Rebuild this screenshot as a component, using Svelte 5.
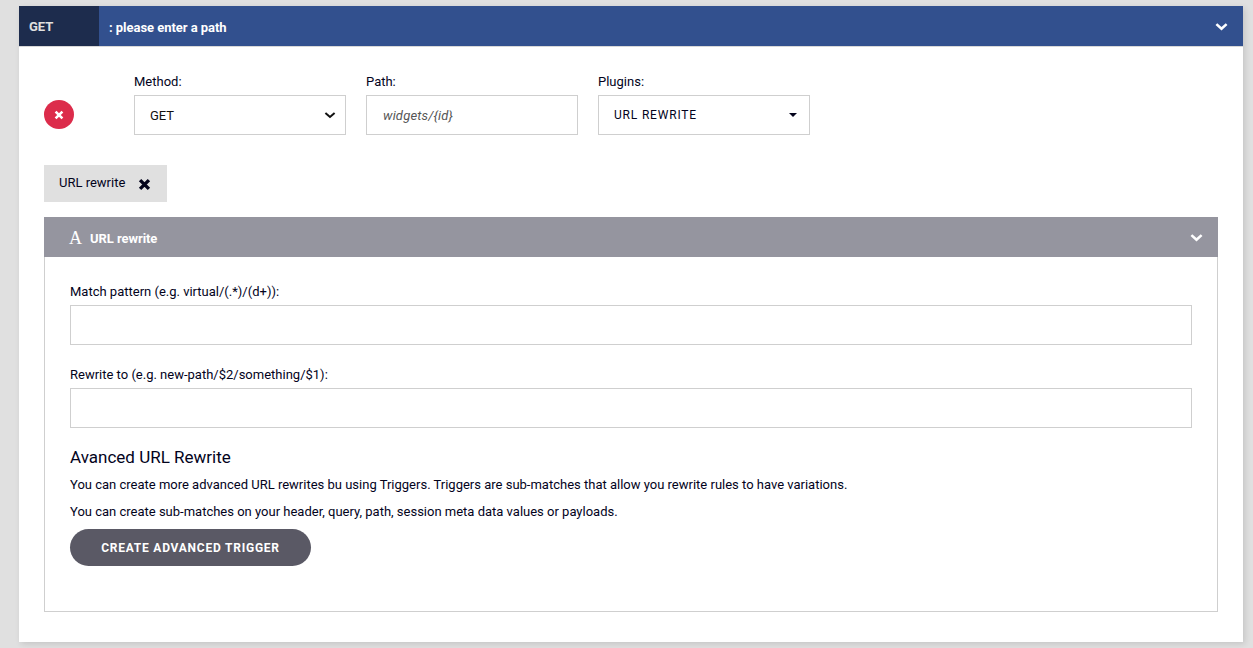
<script>
  const method = 'GET';
  const chevron = 'M1.4 2.1 L6.5 6.7 L11.6 2.1';
  const cross = 'M1.6 1.6 L8.4 8.4 M8.4 1.6 L1.6 8.4';
</script>

<main>
  <section class="card">
    <header class="bar">
      <strong class="verb">{method}</strong>
      <strong class="path">: please enter a path</strong>
      <svg class="chev" width="13" height="9" viewBox="0 0 13 9"><path d={chevron} /></svg>
    </header>

    <div class="body">
      <div class="row">
        <button class="remove" aria-label="Remove">
          <svg width="10" height="10" viewBox="0 0 10 10"><path d={cross} /></svg>
        </button>
        <div class="field">
          <span class="label">Method:</span>
          <div class="box select">
            <span class="value">{method}</span>
            <svg class="dark" width="12" height="9" viewBox="0 0 12 9"><path d="M1.4 2 L6 6 L10.6 2" /></svg>
          </div>
        </div>
        <div class="field">
          <span class="label">Path:</span>
          <div class="box"><em>widgets/&#123;id&#125;</em></div>
        </div>
        <div class="field">
          <span class="label">Plugins:</span>
          <div class="box select plug">
            <span class="upper">URL REWRITE</span>
            <svg width="8" height="4" viewBox="0 0 8 4"><path d="M0 0H8L4 4Z" fill="#03031c" /></svg>
          </div>
        </div>
      </div>

      <div class="tag">
        <span>URL rewrite</span>
        <svg width="13" height="13" viewBox="0 0 10 10"><path d={cross} /></svg>
      </div>

      <section class="panel">
        <header>
          <span class="glyph">A</span>
          <strong>URL rewrite</strong>
          <svg class="chev" width="13" height="9" viewBox="0 0 13 9"><path d={chevron} /></svg>
        </header>
        <div class="content">
          <span class="label">Match pattern (e.g. virtual/(.*)/(d+)):</span>
          <div class="box"></div>
          <span class="label second">Rewrite to (e.g. new-path/$2/something/$1):</span>
          <div class="box"></div>
          <h4>Avanced URL Rewrite</h4>
          <p>You can create more advanced URL rewrites bu using Triggers. Triggers are sub-matches that allow you rewrite rules to have variations.</p>
          <p>You can create sub-matches on your header, query, path, session meta data values or payloads.</p>
          <button class="create">CREATE ADVANCED TRIGGER</button>
        </div>
      </section>
    </div>
  </section>
</main>

<style>
  :global(body) {
    background: #e0e0e0;
    overflow: hidden;
  }
  main {
    box-sizing: border-box;
    height: 648px;
    padding: 6px 10px 6px 19px;
    font-family: Roboto, sans-serif;
    font-size: 13px;
    color: #03031c;
  }
  .card {
    height: 636px;
    background: #fff;
    box-shadow: 2px 2px 6px rgba(0, 0, 0, 0.12);
  }
  .bar {
    display: flex;
    align-items: center;
    height: 40px;
    box-sizing: border-box;
    background: #32508e;
    color: #fff;
    padding-right: 15px;
    box-shadow: 0 1px 0 #d8d8d8;
  }
  .verb {
    box-sizing: border-box;
    width: 80px;
    height: 40px;
    padding-left: 10px;
    line-height: 41px;
    background: #1d2c4d;
    color: #e0e0e0;
  }
  .path {
    padding-left: 10px;
    line-height: 20px;
    padding-top: 3px;
    letter-spacing: -0.04px;
  }
  svg path {
    stroke-linecap: butt;
  }
  .chev {
    margin-left: auto;
    fill: none;
    stroke: #fff;
    stroke-width: 2.6;
  }
  .body {
    padding: 28px 25px 0;
  }
  .row {
    display: flex;
    height: 61px;
  }
  .remove {
    display: flex;
    align-items: center;
    justify-content: center;
    width: 30px;
    height: 29px;
    margin: 26px 60px 0 0;
    padding: 1px 0 0;
    border: 0;
    border-radius: 50%;
    background: #dc2c4b;
  }
  .remove path {
    stroke: #fff;
    stroke-width: 2.6;
  }
  .field {
    width: 212px;
    margin-right: 20px;
  }
  .label {
    display: block;
    height: 21px;
    line-height: 16px;
  }
  .box {
    box-sizing: border-box;
    height: 40px;
    border: 1px solid #cfcfcf;
    background: #fff;
    display: flex;
    align-items: center;
    padding: 0 9px 0 16px;
  }
  .select {
    justify-content: space-between;
    padding-left: 15px;
  }
  .value {
    color: #111;
  }
  .dark {
    fill: none;
    stroke: #111;
    stroke-width: 2;
  }
  .plug {
    padding-right: 12px;
  }
  .upper {
    font-size: 12px;
    letter-spacing: 0.82px;
  }
  em {
    color: #555;
    letter-spacing: 0.16px;
  }
  .tag {
    display: flex;
    align-items: center;
    box-sizing: border-box;
    width: 123px;
    height: 37px;
    margin-top: 30px;
    padding: 0 16px 2px 15px;
    justify-content: space-between;
    background: #e0e0e0;
  }
  .tag svg {
    margin-top: 3px;
  }
  .tag path {
    stroke: #03031c;
    stroke-width: 2.6;
  }
  .panel {
    box-sizing: border-box;
    height: 395px;
    margin-top: 15px;
    border: 1px solid #cfcfcf;
    border-top: 0;
  }
  .panel header {
    display: flex;
    align-items: center;
    height: 40px;
    margin: 0 -1px;
    padding: 0 15px 0 25px;
    background: #95959f;
    color: #fff;
  }
  .panel header strong {
    padding-top: 3px;
    letter-spacing: -0.06px;
  }
  .glyph {
    width: 21px;
    padding-top: 2px;
    font: 18px "Liberation Serif", serif;
  }
  .content {
    padding: 27px 25px 0;
  }
  .second {
    margin-top: 22px;
    height: 21px;
  }
  h4 {
    margin: 19px 0 8px;
    font-size: 17px;
    font-weight: 400;
    line-height: 20px;
  }
  p {
    margin: 0 0 7px;
    line-height: 20px;
  }
  .create {
    width: 241px;
    height: 37px;
    padding: 0;
    border: 0;
    border-radius: 19px;
    background: #5a5965;
    color: #fff;
    font: 700 12px Roboto, sans-serif;
    letter-spacing: 0.77px;
  }
</style>
